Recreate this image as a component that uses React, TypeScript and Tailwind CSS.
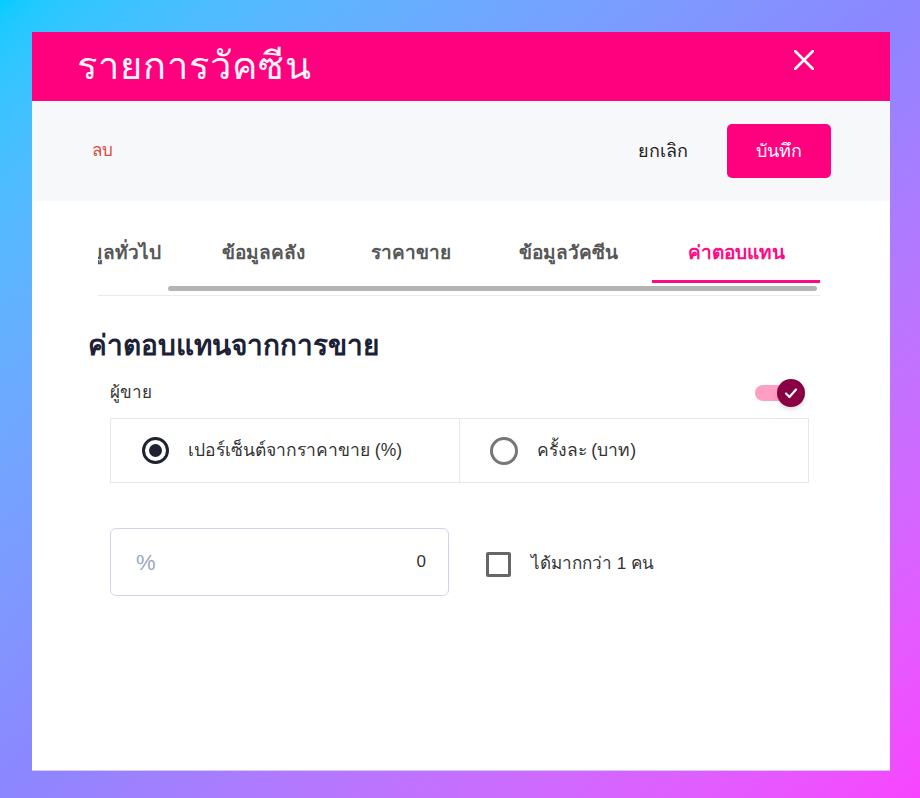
import React from "react";

const tabs = [
  { label: "ข้อมูลทั่วไป", w: "w-[150px]" },
  { label: "ข้อมูลคลัง", w: "w-[150px]" },
  { label: "ราคาขาย", w: "w-[146px]" },
  { label: "ข้อมูลวัคซีน", w: "w-[168px]" },
  { label: "ค่าตอบแทน", w: "w-[168px]" },
];

const App = () => {
  return (
    <div className="w-[920px] h-[798px] bg-gradient-to-br from-[#00ccff] via-[#8c86ff] to-[#f844ff] pt-8 pl-8 font-['Liberation_Sans','Noto_Sans',sans-serif]">
      <div className="w-[858px] h-[739px] bg-white flex flex-col border-b border-[#d9c8ff]">
        {/* header */}
        <div className="h-[69px] bg-[#ff007f] flex items-center justify-between pl-[45px] pr-[76px]">
          <h1 className="text-[38px] text-[#fff5fb] tracking-wide">รายการวัคซีน</h1>
          <svg width="20" height="20" viewBox="0 0 20 20" className="mb-[14px]">
            <path d="M1 1 L19 19 M19 1 L1 19" stroke="white" strokeWidth="2.6" strokeLinecap="round" />
          </svg>
        </div>

        {/* toolbar */}
        <div className="h-[100px] bg-[#f7f8fa] flex items-center justify-between pl-[60px] pr-[59px]">
          <button className="text-[17px] text-[#e0483c]">ลบ</button>
          <div className="flex items-center gap-[39px]">
            <button className="text-[18px] text-[#222]">ยกเลิก</button>
            <button className="w-[104px] h-[54px] rounded-[5px] bg-[#ff007f] text-white text-[18px]">บันทึก</button>
          </div>
        </div>

        {/* tabs, scrolled to the right */}
        <div className="ml-[66px] mr-[70px] mt-[26px] border-b border-[#e6ebf2]">
          <div className="overflow-hidden">
            <div className="flex justify-end">
              {tabs.map((t, i) => {
                const active = i === tabs.length - 1;
                return (
                  <div
                    key={t.label}
                    className={
                      active
                        ? `${t.w} shrink-0 h-[56px] flex items-center justify-center text-[19px] text-[#ff0a84] font-semibold border-b-[3px] border-[#ff0a84]`
                        : `${t.w} shrink-0 h-[56px] flex items-center justify-center text-[19px] text-[#575757] font-semibold border-b-[3px] border-transparent`
                    }
                  >
                    {t.label}
                  </div>
                );
              })}
            </div>
          </div>
          <div className="h-[12px] pt-[3px] pl-[70px] pr-[3px]">
            <div className="h-[5px] rounded-full bg-[#b4b4b4]" />
          </div>
        </div>

        {/* body */}
        <div className="pl-[56px] pr-[81px] pt-[29px]">
          <h2 className="text-[28px] font-bold text-[#1c2236]">ค่าตอบแทนจากการขาย</h2>

          <div className="ml-[22px] mt-[9px]">
            <div className="flex items-center justify-between h-[34px]">
              <span className="text-[17px] text-[#333]">ผู้ขาย</span>
              <div className="relative w-[50px] h-[28px] mr-[4px] flex items-center">
                <div className="w-[40px] h-[16px] rounded-full bg-[#ff9ec3]" />
                <div className="absolute right-0 top-0 w-[28px] h-[28px] rounded-full bg-[#8a0044] shadow-md flex items-center justify-center">
                  <svg width="16" height="16" viewBox="0 0 16 16">
                    <path d="M3 8.5 L6.5 12 L13 4.5" fill="none" stroke="white" strokeWidth="2.2" strokeLinecap="round" strokeLinejoin="round" />
                  </svg>
                </div>
              </div>
            </div>

            <div className="mt-[8px] h-[65px] border border-[#e3e8ef] grid grid-cols-2">
              <label className="flex items-center pl-[31px] gap-[19px] border-r border-[#e3e8ef]">
                <span className="w-[27px] h-[27px] rounded-full border-[3px] border-[#1e2333] flex items-center justify-center">
                  <span className="w-[13px] h-[13px] rounded-full bg-[#1e2333]" />
                </span>
                <span className="text-[17.5px] text-[#333]">เปอร์เซ็นต์จากราคาขาย (%)</span>
              </label>
              <label className="flex items-center pl-[30px] gap-[19px]">
                <span className="w-[28px] h-[28px] rounded-full border-[3px] border-[#777]" />
                <span className="text-[17.5px] text-[#333]">ครั้งละ (บาท)</span>
              </label>
            </div>

            <div className="mt-[45px] flex items-center">
              <div className="w-[339px] h-[68px] rounded-[6px] border border-[#cdd6e6] flex items-center justify-between pl-[25px] pr-[22px]">
                <span className="text-[22px] text-[#9aa6bd]">%</span>
                <span className="text-[17px] text-[#333]">0</span>
              </div>
              <label className="ml-[37px] flex items-center gap-[20px] mt-[4px]">
                <span className="w-[25px] h-[25px] rounded-[2px] border-[3px] border-[#666]" />
                <span className="text-[17px] text-[#333]">ได้มากกว่า 1 คน</span>
              </label>
            </div>
          </div>
        </div>
      </div>
    </div>
  );
};

export default App;
